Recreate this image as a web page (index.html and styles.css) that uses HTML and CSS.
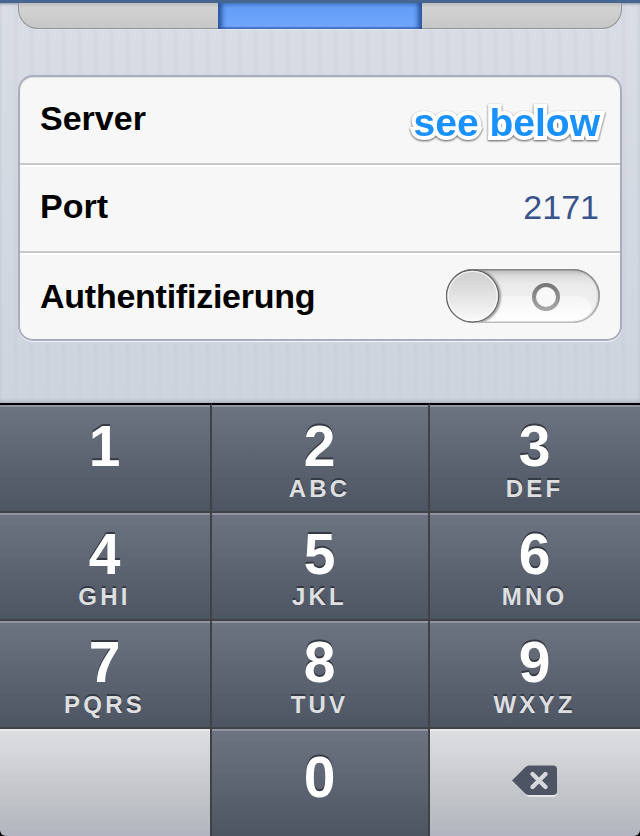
FILE: index.html
```
<!DOCTYPE html>
<html lang="de">
<head>
<meta charset="utf-8">
<title>Server</title>
<link rel="stylesheet" href="styles.css">
</head>
<body>
<main class="screen">
  <section class="settings">
    <div class="segments"><span class="segment"></span><span class="segment selected"></span><span class="segment"></span></div>
    <div class="group">
      <div class="row server"><span>Server</span><span class="annotation">see below</span></div>
      <div class="row port"><span>Port</span><span class="value">2171</span></div>
      <div class="row auth"><span class="auth-label">Authentifizierung</span>
        <svg class="switch" width="154" height="56" viewBox="0 0 154 56">
          <defs>
            <linearGradient id="track" x2="0" y2="1"><stop stop-color="#b5b5b5"/><stop offset=".13" stop-color="#dcdcdc"/><stop offset=".28" stop-color="#ebebeb"/><stop offset="1" stop-color="#f3f3f3"/></linearGradient>
            <linearGradient id="edge" x2="0" y2="1"><stop stop-color="#858585"/><stop offset=".5" stop-color="#999"/><stop offset="1" stop-color="#bcbcbc"/></linearGradient>
            <linearGradient id="knob" x2="0" y2="1"><stop stop-color="#cdcdcd"/><stop offset="1" stop-color="#fafafa"/></linearGradient>
            <linearGradient id="gloss" x2="0" y2="1"><stop stop-color="#f5f5f5"/><stop offset="1" stop-color="#fff"/></linearGradient>
            <linearGradient id="ring" x2="0" y2="1"><stop stop-color="#787878"/><stop offset="1" stop-color="#a5a5a5"/></linearGradient>
            <filter id="soft"><feGaussianBlur stdDeviation="1.3"/></filter>
            <clipPath id="pill"><rect width="154" height="54" rx="27"/></clipPath>
          </defs>
          <rect width="154" height="54" rx="27" fill="url(#track)"/>
          <g clip-path="url(#pill)">
            <path d="M27 27H132Q144 28 146 41Q140 52 127 53H27Z" fill="url(#gloss)"/>
            <path d="M127 0C162 1 162 53 127 54" fill="none" stroke="#aaa" stroke-width="2" filter="url(#soft)"/>
            <circle cx="27.500" cy="27.5" r="26" fill="none" stroke="#888" stroke-width="2.500" filter="url(#soft)"/>
          </g>
          <rect x=".75" y=".75" width="152.5" height="52.5" rx="26.25" fill="none" stroke="url(#edge)" stroke-width="1.5"/>
          <circle cx="26.6" cy="27" r="26" fill="url(#knob)" stroke="#686868" stroke-width="1.3"/>
          <circle cx="26.6" cy="27" r="24.6" fill="none" stroke="#fff" stroke-opacity=".7" stroke-width="1.3"/>
          <circle cx="100" cy="28" r="12" fill="#f8f8f8" stroke="url(#ring)" stroke-width="4"/>
        </svg>
      </div>
    </div>
  </section>
  <section class="keypad">
    <div class="key"><b>1</b></div>
    <div class="key"><b>2</b><small>ABC</small></div>
    <div class="key"><b>3</b><small>DEF</small></div>
    <div class="key"><b>4</b><small>GHI</small></div>
    <div class="key"><b>5</b><small>JKL</small></div>
    <div class="key"><b>6</b><small>MNO</small></div>
    <div class="key"><b>7</b><small>PQRS</small></div>
    <div class="key"><b>8</b><small>TUV</small></div>
    <div class="key"><b>9</b><small>WXYZ</small></div>
    <div class="key light blank"></div>
    <div class="key zero"><b>0</b></div>
    <div class="key light delete">
      <svg width="46" height="34" viewBox="0 0 46 34">
        <path d="M1 17 14 4Q16 2 18 2H41Q45 2 45 6V28Q45 32 41 32H18Q16 32 14 30Z" fill="#e5e6ea"/>
        <path d="M0 15.5 13 2.500Q15 .5 17 .5H41Q45 .5 45 4.500V26.500Q45 30 41 30H17Q15 30 13 28.500Z" fill="#4d5564"/>
        <path d="M20.500 9 33.500 22M33.500 9 20.500 22" stroke="#d6d8db" stroke-width="4.400" stroke-linecap="round"/>
      </svg>
    </div>
  </section>
</main>
</body>
</html>
```
FILE: styles.css
```
* { box-sizing: border-box; }
body { margin: 0; background: #000; font-family: "Liberation Sans", Arial, sans-serif; }
.screen { width: 640px; height: 836px; display: flex; flex-direction: column; overflow: hidden; }
.settings {
  height: 403px;
  padding: 0 18px;
  border-top: 3px solid #46658f;
  box-shadow: inset 0 3px 3px -2px #8c93a2, inset 0 -4px 4px -3px #a0a5b0;
  background:
    repeating-linear-gradient(90deg, rgba(190,200,217,.2) 0 2px, transparent 2px 13px, rgba(190,200,217,.2) 13px 16px),
    linear-gradient(#d9dde5, #ced3de);
}
.segments {
  display: grid;
  grid-template-columns: 200px 204px 200px;
  height: 27px;
  margin-bottom: 45px;
  border-bottom: 1px solid #e3e6ed;
  border-radius: 0 0 21px 21px;
}
.segment { background: linear-gradient(#bcbcbc, #d2d2d2 5px, #c7c7c7); border-bottom: 1px solid #929294; }
.segment:first-child { border-left: 1px solid #929294; border-radius: 0 0 0 20px; }
.segment:last-child { border-right: 1px solid #929294; border-radius: 0 0 20px 0; }
.segment.selected {
  border: 0;
  background: linear-gradient(#4c82d8, #649df5 5px, #71a7ff);
  box-shadow: inset 7px 0 5px -3px #29539d, inset -7px 0 5px -3px #29539d, inset 0 -2px 1px #477bc9;
}
.group {
  height: 266px;
  border: 2px solid #a9afba;
  border-radius: 15px;
  background: #f7f7f7;
  box-shadow: 0 1px 0 #f3f5f8, inset 0 1px 1px #dedede;
}
.row {
  height: 88px;
  padding: 0 20px;
  display: flex;
  align-items: center;
  justify-content: space-between;
  font-size: 34px;
  font-weight: bold;
  line-height: 40px;
  border-bottom: 2px solid #c8c8c8;
}
.row + .row { border-top: 2px solid #fff; }
.row:last-child { border-bottom: 0; height: 86px; }
.server { padding-bottom: 4px; }
.port { padding-bottom: 7px; }
.value { color: #38548a; font-weight: normal; padding: 2px 1px 0 0; }
.annotation {
  font-size: 39px;
  color: #1991ff;
  -webkit-text-stroke: 8px #fff;
  paint-order: stroke fill;
  stroke-linejoin: round;
  filter: drop-shadow(0 1.5px 1.2px rgba(0,0,0,.65));
  padding-top: 10px;
}
.auth-label { letter-spacing: -.25px; padding-bottom: 2px; }
.switch { display: block; }
.keypad {
  height: 433px;
  display: grid;
  grid-template-columns: 212px 218px 210px;
  grid-template-rows: 110px 108px 108px 107px;
  border-radius: 0 0 6px 6px;
  overflow: hidden;
}
.key {
  display: flex;
  flex-direction: column;
  align-items: center;
  padding-top: 11px;
  color: #fff;
  border: solid #404144;
  border-width: 0 2px 2px 0;
  background: linear-gradient(#9193a0 2px, #6d7481 2px, #4d5562);
  text-shadow: 0 -2px 0 #343942;
}
.key:nth-child(-n+3) { border-top: 2px solid #000; }
.key:nth-child(3n) { border-right: 0; }
.key:nth-child(n+10) { border-bottom: 0; }
.key b { font-size: 57px; line-height: 60px; height: 61px; padding-right: 1px; }
.key small { font-size: 24px; font-weight: bold; line-height: 24px; letter-spacing: 3.2px; padding-right: 1px; color: #dddfe0; }
.key.zero { padding-top: 18px; }
.key.light { background: linear-gradient(#e9e9eb 2px, #dddee2 2px, #bec1c5 70%, #b1b5bf); }
.key.delete { padding-top: 36px; }
```
